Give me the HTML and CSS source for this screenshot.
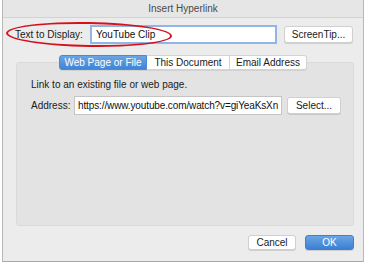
FILE: index.html
```html
<!DOCTYPE html>
<html lang="en">
<head>
  <meta charset="UTF-8">
  <title>Insert Hyperlink</title>
  <link rel="stylesheet" href="styles.css">
</head>
<body>
  <div class="window">
    <div class="titlebar">Insert Hyperlink</div>

    <div class="top-row">
      <label class="label">Text to Display:</label>
      <div class="field focused">YouTube Clip</div>
      <button class="btn screentip">ScreenTip...</button>
    </div>

    <div class="tabs">
      <span class="tab active">Web Page or File</span>
      <span class="tab doc">This Document</span>
      <span class="tab email">Email Address</span>
    </div>

    <div class="panel">
      <p class="hint">Link to an existing file or web page.</p>
      <div class="address-row">
        <label class="label">Address:</label>
        <div class="field address">https://www.youtube.com/watch?v=giYeaKsXn</div>
        <button class="btn select">Select...</button>
      </div>
    </div>

    <div class="footer">
      <button class="btn cancel">Cancel</button>
      <button class="btn ok">OK</button>
    </div>

    <!-- red annotation circled over the label -->
    <div class="annotation"></div>
  </div>
</body>
</html>
```

FILE: styles.css
```css
body {
  margin: 0;
  background-color: #ffffff;
  font-family: "Liberation Sans", Arial, sans-serif;
  font-size: 10px;
  color: #1a1a1a;
}
.window {
  position: relative;
  width: 362px;
  height: 262px;
  margin-left: 2px;
  box-sizing: border-box;
  background-color: #ececec;
  border-left: 1px solid #b8b8b8;
  border-right: 1px solid #b8b8b8;
  border-bottom: 1px solid #a8a8a8;
}
.titlebar {
  height: 17px;
  line-height: 17px;
  text-align: center;
  color: #4a4a4a;
  background-color: #e6e6e6;
  border-bottom: 1px solid #d2d2d2;
}
.top-row {
  display: flex;
  align-items: center;
  padding: 7px 0 0 12px;
  height: 19px;
}
.top-row .label {
  width: 75px;
}
.field {
  box-sizing: border-box;
  height: 18px;
  line-height: 16px;
  padding: 0 5px;
  background-color: #ffffff;
  border: 1px solid #c4c4c4;
  white-space: nowrap;
  overflow: hidden;
  color: #111;
}
.focused {
  width: 187px;
  height: 19px;
  border: 2px solid #8fb6e6;
  line-height: 15px;
  padding-left: 4px;
}
.btn {
  box-sizing: border-box;
  font-family: inherit;
  font-size: 10px;
  color: #1a1a1a;
  background-color: #ffffff;
  border: 1px solid #d0d0d0;
  border-radius: 3px;
  box-shadow: 0 1px 0 rgba(0,0,0,0.12);
  height: 17px;
  padding: 0;
}
.screentip {
  width: 69px;
  margin-left: 7px;
}
.tabs {
  display: flex;
  justify-content: center;
  margin: 11px 0 0 0;
  position: relative;
  z-index: 1;
}
.tab {
  box-sizing: border-box;
  height: 15px;
  line-height: 13px;
  text-align: center;
  background-color: #ffffff;
  border: 1px solid #d4d4d4;
  border-left: none;
  box-shadow: 0 1px 0 rgba(0,0,0,0.08);
}
.tab.active {
  width: 88px;
  border-radius: 3px 0 0 3px;
  background: linear-gradient(#6aa5e4, #3f84d6);
  color: #ffffff;
  border: 1px solid #4a8ad8;
}
.tab.doc {
  width: 83px;
}
.tab.email {
  width: 77px;
  border-radius: 0 3px 3px 0;
}
.panel {
  margin: -8px 9px 0 13px;
  height: 164px;
  box-sizing: border-box;
  padding: 16px 0 0 14px;
  background-color: #e3e3e3;
  border: 1px solid #dadada;
  border-radius: 3px;
}
.hint {
  margin: 0 0 6px 0;
}
.address-row {
  display: flex;
  align-items: center;
}
.address-row .label {
  width: 43px;
}
.address {
  width: 208px;
  height: 19px;
  line-height: 17px;
  padding-left: 3px;
  letter-spacing: -0.12px;
}
.select {
  width: 54px;
  margin-left: 5px;
}
.footer {
  display: flex;
  justify-content: flex-end;
  padding: 9px 9px 0 0;
}
.cancel {
  width: 48px;
  height: 15px;
}
.ok {
  width: 49px;
  height: 15px;
  margin-left: 9px;
  color: #ffffff;
  background: linear-gradient(#6aa5e4, #3c80d4);
  border-color: #3f7fce;
}
.annotation {
  position: absolute;
  left: 3px;
  top: 22px;
  width: 162px;
  height: 21px;
  border: 2.5px solid #d4121e;
  border-radius: 50%;
  transform: rotate(1deg);
}
```
